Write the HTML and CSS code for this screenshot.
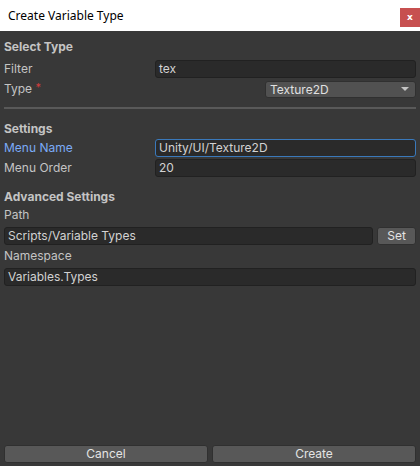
FILE: index.html
```html
<!DOCTYPE html>
<html>
<head>
<meta charset="utf-8">
<link rel="stylesheet" href="styles.css">
</head>
<body>
<div class="window">
  <div class="titlebar">
    <span class="title">Create Variable Type</span>
    <span class="close">x</span>
  </div>
  <div class="content">
    <div class="header first">Select Type</div>
    <div class="row r-filter">
      <span class="label">Filter</span>
      <div class="input"><span>tex</span></div>
    </div>
    <div class="row r-type">
      <span class="label">Type <span class="req">*</span></span>
      <div class="spacer"></div>
      <div class="dropdown"><span>Texture2D</span><span class="arrow"></span></div>
    </div>
    <div class="separator"></div>
    <div class="header h-settings">Settings</div>
    <div class="row r-menuname">
      <span class="label focused">Menu Name</span>
      <div class="input focus"><span>Unity/UI/Texture2D</span></div>
    </div>
    <div class="row r-menuorder">
      <span class="label">Menu Order</span>
      <div class="input"><span>20</span></div>
    </div>
    <div class="header h-adv">Advanced Settings</div>
    <div class="label-line">Path</div>
    <div class="row r-path">
      <div class="input wide"><span>Scripts/Variable Types</span></div>
      <div class="btn set">Set</div>
    </div>
    <div class="label-line l-ns">Namespace</div>
    <div class="row r-ns">
      <div class="input wide"><span>Variables.Types</span></div>
    </div>
    <div class="footer">
      <div class="btn big">Cancel</div>
      <div class="btn big">Create</div>
    </div>
  </div>
</div>
</body>
</html>
```
FILE: styles.css
```css
* { box-sizing: border-box; }
html, body { margin: 0; padding: 0; }
body {
  width: 420px;
  height: 466px;
  overflow: hidden;
  background: #383838;
  font-family: Inter, "Noto Sans", sans-serif;
  font-size: 12px;
  color: #c4c4c4;
}
.window {
  width: 420px;
  height: 466px;
  display: flex;
  flex-direction: column;
}
.titlebar {
  height: 31px;
  background: #ffffff;
  display: flex;
  align-items: flex-start;
  justify-content: space-between;
  flex: none;
}
.title {
  font-family: "Noto Sans", "Open Sans", sans-serif;
  font-size: 12px;
  color: #000;
  margin-left: 8px;
  margin-top: 7px;
  line-height: 17px;
}
.close {
  width: 20px;
  height: 19px;
  margin-top: 8px;
  background: #c75050;
  color: #fff;
  font-family: "DejaVu Sans", sans-serif;
  font-weight: bold;
  font-size: 9px;
  line-height: 18px;
  text-align: center;
}
.content {
  flex: 1;
  display: flex;
  flex-direction: column;
  padding: 0 4px 2px 4px;
}
.header {
  font-weight: bold;
  height: 18px;
  line-height: 18px;
  color: #c4c4c4;
}
.header.first { margin-top: 7px; }
.h-settings { margin-top: 11px; }
.h-adv { margin-top: 11px; }
.row {
  display: flex;
  align-items: center;
  height: 18px;
}
.r-filter { margin-top: 4px; }
.r-type { margin-top: 2px; }
.r-menuname { margin-top: 1px; }
.r-menuorder { margin-top: 2px; }
.r-path { margin-top: 3px; }
.r-ns { margin-top: 3px; }
.label {
  width: 151px;
  flex: none;
  line-height: 18px;
  white-space: nowrap;
}
.label.focused { color: #7babf7; }
.req {
  color: #d13c3c;
  font-size: 11px;
  position: relative;
  top: -2px;
}
.label-line {
  height: 18px;
  line-height: 18px;
}
.l-ns { margin-top: 2px; }
.input {
  flex: 1;
  height: 18px;
  background: #2a2a2a;
  border: 1px solid #212121;
  border-radius: 3px;
  color: #d2d2d2;
  padding-left: 3px;
  line-height: 16px;
  white-space: nowrap;
  overflow: hidden;
}
.input.focus { border-color: #3a79bb; }
.spacer { width: 110px; flex: none; }
.dropdown {
  flex: 1;
  height: 17px;
  background: #515151;
  border: 1px solid #303030;
  border-radius: 3px;
  color: #e0e0e0;
  padding-left: 4px;
  padding-right: 6px;
  line-height: 15px;
  display: flex;
  align-items: center;
  justify-content: space-between;
}
.arrow {
  width: 0;
  height: 0;
  border-left: 4px solid transparent;
  border-right: 4px solid transparent;
  border-top: 4px solid #c4c4c4;
}
.separator {
  height: 2px;
  background: #595959;
  margin-top: 9px;
}
.btn {
  background: #585858;
  border: 1px solid #303030;
  border-radius: 3px;
  color: #e4e4e4;
  text-align: center;
  height: 18px;
  line-height: 16px;
}
.set {
  width: 39px;
  margin-left: 4px;
  flex: none;
}
.footer {
  margin-top: auto;
  display: flex;
  gap: 4px;
  height: 18px;
  margin-bottom: 1px;
}
.big { flex: 1; }
```
